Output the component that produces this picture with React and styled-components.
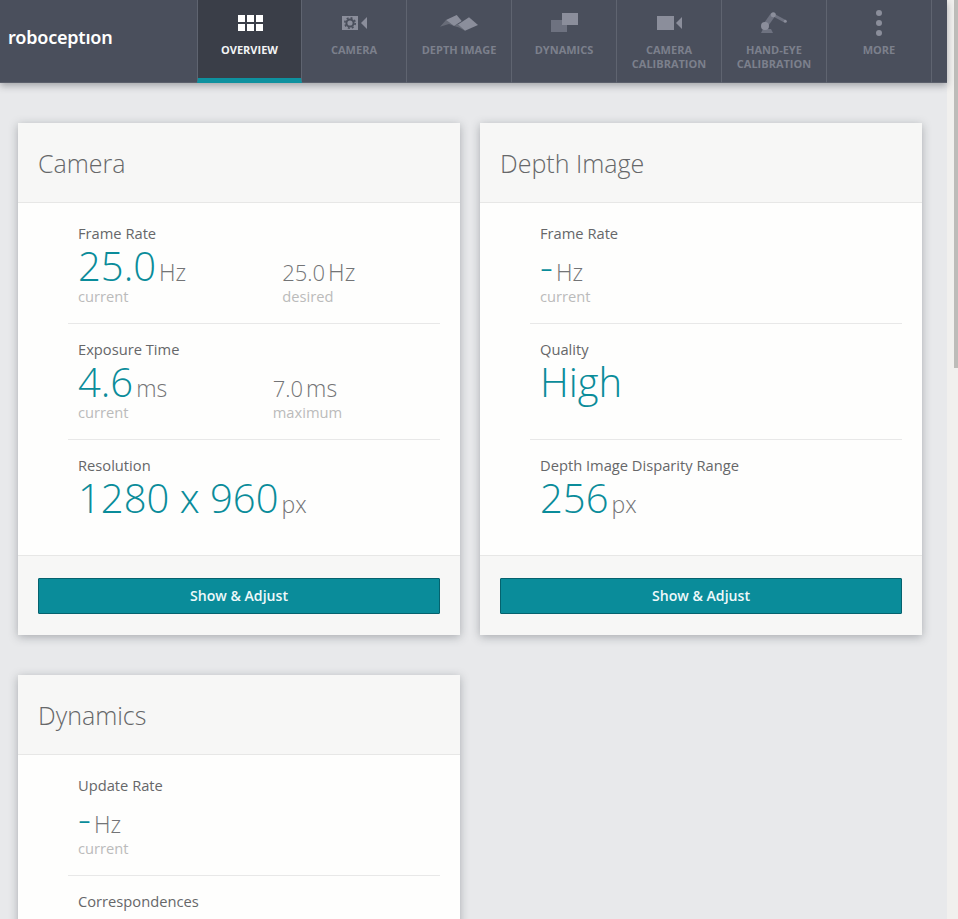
import React from "react";
import styled, { createGlobalStyle } from "styled-components";

const Global = createGlobalStyle`
  html, body { margin: 0; padding: 0; height: 100%; overflow: hidden; background: #e8e9eb; }
  * { box-sizing: border-box; }
  body { font-family: "Open Sans", "Noto Sans", sans-serif; }
`;

const Shell = styled.div`
  display: flex;
  width: 958px;
  height: 919px;
  overflow: hidden;
`;
const Main = styled.div`
  width: 947px;
  flex: none;
  display: flex;
  flex-direction: column;
  background: #e8e9eb;
`;
const ScrollTrack = styled.div`
  width: 11px;
  flex: none;
  background: #f1f0ee;
  display: flex;
  justify-content: flex-end;
`;
const ScrollThumb = styled.div`
  width: 4px;
  height: 368px;
  background: #bdbcb9;
`;
const Header = styled.header`
  height: 83px;
  flex: none;
  display: flex;
  background: #4a4f5c;
  border-bottom: 1px solid #5b5f6b;
  box-shadow: 0 3px 7px rgba(40, 44, 52, 0.35);
  position: relative;
  z-index: 2;
`;
const LogoArea = styled.div`
  width: 197px;
  flex: none;
  padding: 0 0 0 8px;
  display: flex;
  align-items: center;
`;
const Logo = styled.span`
  font-family: "Noto Sans", "Open Sans", sans-serif;
  font-weight: 600;
  font-size: 18px;
  line-height: 24px;
  letter-spacing: -0.2px;
  color: #fff;
  margin-top: -9px;
`;
const Nav = styled.nav`
  display: flex;
  height: 83px;
`;
const Tab = styled.div`
  width: 105px;
  height: 83px;
  flex: none;
  display: flex;
  flex-direction: column;
  align-items: center;
  border-right: 1px solid #5f6470;
  background: ${(p) => (p.$active ? "#3a3e48" : "transparent")};
  border-bottom: ${(p) => (p.$active ? "5px solid #0e919f" : "none")};
  border-left: ${(p) => (p.$active ? "1px solid #5f6470" : "none")};
`;
const TabIcon = styled.svg`
  width: 104px;
  height: 43px;
  flex: none;
  display: block;
  fill: #8b8e9b;
`;
const TabLabel = styled.div`
  font-size: 11px;
  font-weight: 700;
  line-height: 14px;
  text-align: center;
  text-transform: uppercase;
  color: ${(p) => (p.$active ? "#f3f4f5" : "#7c808c")};
`;
const Content = styled.main`
  flex: 1;
  min-height: 0;
  padding: 40px 0 0 18px;
  display: flex;
  flex-wrap: wrap;
  align-content: flex-start;
  column-gap: 20px;
  row-gap: 40px;
`;
const Card = styled.section`
  width: 442px;
  background: #fefefd;
  box-shadow: 0 2px 10px rgba(50, 54, 62, 0.35);
  border-radius: 1px;
`;
const CardHead = styled.div`
  height: 80px;
  padding: 0 20px;
  display: flex;
  align-items: center;
  background: #f7f7f6;
  border-bottom: 1px solid #e7e7e6;
`;
const CardTitle = styled.h2`
  margin: 0;
  font-size: 25px;
  font-weight: 300;
  color: #666769;
`;
const CardBody = styled.div`
  padding: 5px 20px 0 50px;
`;
const Row = styled.div`
  height: ${(p) => (p.$last ? 115 : 116)}px;
  padding: 15px 0 0 10px;
  border-bottom: ${(p) => (p.$last ? "none" : "1px solid #e8e8e8")};
`;
const RowLabel = styled.div`
  font-size: 14.7px;
  line-height: 20px;
  color: #666769;
`;
const Values = styled.div`
  display: flex;
  margin-top: 3px;
`;
const Metric = styled.div`
  margin-left: ${(p) => p.$offset || 0}px;
`;
const Reading = styled.div`
  height: 40px;
  font-size: 40px;
  line-height: 40px;
  white-space: nowrap;
  font-weight: 300;
  color: #737476;
`;
const BigNumber = styled.span`
  color: #0a8c9a;
`;
const SmallNumber = styled.span`
  font-size: 22px;
  line-height: 1;
`;
const Unit = styled.span`
  font-size: 23px;
  line-height: 1;
  margin-left: 3px;
`;
const Caption = styled.div`
  font-size: 14.7px;
  line-height: 20px;
  color: #bbbbbb;
`;
const CardFoot = styled.div`
  height: 80px;
  padding: 22px 20px 0;
  background: #f7f7f6;
  border-top: 1px solid #e7e7e6;
`;
const Button = styled.button`
  display: block;
  width: 100%;
  height: 36px;
  padding: 0 0 2px;
  border: 1px solid #05626e;
  border-radius: 1px;
  background: #0a8c9a;
  color: #eef9fa;
  font-family: inherit;
  font-size: 14.1px;
  font-weight: 600;
`;
const DashValue = styled.span`
  color: #0a8c9a;
`;

const icons = {
  overview: (
    <>
      {[0, 9, 18].flatMap((dx) =>
        [15, 24].map((y) => <rect key={dx + "-" + y} x={40 + dx} y={y} width="7" height="7" fill="#fff" />)
      )}
    </>
  ),
  camera: (
    <>
      <rect x="40" y="16" width="16" height="14" />
      <polygon points="59,23 65,17 65,29" />
      <circle cx="48" cy="23" r="3.6" fill="none" stroke="#4a4f5c" strokeWidth="2" />
      <circle cx="48" cy="23" r="5.2" fill="none" stroke="#4a4f5c" strokeWidth="1.6" strokeDasharray="2 2.08" />
    </>
  ),
  depth: (
    <>
      <polygon points="33,26.7 39,20 47,26 42,24" fill="#686c78" />
      <polygon points="47,26 51,24 58,30.7 52,27.5" fill="#686c78" />
      <polygon points="39,20 49.7,15 54.7,21 47,26" />
      <polygon points="51,24.5 62,17.3 71,25 58,30.7" />
    </>
  ),
  dynamics: (
    <>
      <rect x="39" y="20" width="16" height="12" fill="#6e7280" />
      <rect x="50" y="13" width="16" height="12" />
    </>
  ),
  calibration: (
    <>
      <rect x="40" y="16" width="17" height="14" />
      <polygon points="59,23 65,17 65,29" />
    </>
  ),
  robot: (
    <>
      <polygon points="39,33 41,29 49,29 51,33" fill="#6e7280" />
      <path d="M43 26 L51 14.7" stroke="#6e7280" strokeWidth="5" fill="none" />
      <path d="M51 14.7 L63 21.3" stroke="#6e7280" strokeWidth="3" fill="none" />
      <circle cx="43" cy="26" r="4" />
      <circle cx="51.3" cy="14.7" r="2.5" />
      <circle cx="63.3" cy="21.3" r="1.5" />
    </>
  ),
  more: (
    <>
      <circle cx="52" cy="13" r="3" />
      <circle cx="52" cy="23" r="3" />
      <circle cx="52" cy="33" r="3" />
    </>
  ),
};

const tabs = [
  { key: "overview", label: "Overview", active: true },
  { key: "camera", label: "Camera" },
  { key: "depth", label: "Depth Image" },
  { key: "dynamics", label: "Dynamics" },
  { key: "calibration", label: <>Camera<br />Calibration</> },
  { key: "robot", label: <>Hand-Eye<br />Calibration</> },
  { key: "more", label: "More" },
];

function Measure({ value, unit, caption, small, offset }) {
  const Num = small ? SmallNumber : BigNumber;
  return (
    <Metric $offset={offset}>
      <Reading>
        <Num>{value}</Num>
        {unit && <Unit>{unit}</Unit>}
      </Reading>
      {caption && <Caption>{caption}</Caption>}
    </Metric>
  );
}

function MetricRow({ label, children, last }) {
  return (
    <Row $last={last}>
      <RowLabel>{label}</RowLabel>
      <Values>{children}</Values>
    </Row>
  );
}

export default function App() {
  return (
    <Shell>
      <Global />
      <Main>
        <Header>
          <LogoArea>
            <Logo>roboceptıon</Logo>
          </LogoArea>
          <Nav>
            {tabs.map((t) => (
              <Tab key={t.key} $active={t.active}>
                <TabIcon viewBox="0 0 104 43">{icons[t.key]}</TabIcon>
                <TabLabel $active={t.active}>{t.label}</TabLabel>
              </Tab>
            ))}
          </Nav>
        </Header>
        <Content>
          <Card>
            <CardHead><CardTitle>Camera</CardTitle></CardHead>
            <CardBody>
              <MetricRow label="Frame Rate">
                <Measure value="25.0" unit="Hz" caption="current" />
                <Measure small value="25.0" unit="Hz" caption="desired" offset={96} />
              </MetricRow>
              <MetricRow label="Exposure Time">
                <Measure value="4.6" unit="ms" caption="current" />
                <Measure small value="7.0" unit="ms" caption="maximum" offset={105.5} />
              </MetricRow>
              <MetricRow label="Resolution" last>
                <Measure value="1280 x 960" unit="px" />
              </MetricRow>
            </CardBody>
            <CardFoot><Button>Show &amp; Adjust</Button></CardFoot>
          </Card>
          <Card>
            <CardHead><CardTitle>Depth Image</CardTitle></CardHead>
            <CardBody>
              <MetricRow label="Frame Rate">
                <Measure value={<DashValue>-</DashValue>} unit="Hz" caption="current" />
              </MetricRow>
              <MetricRow label="Quality">
                <Measure value="High" />
              </MetricRow>
              <MetricRow label="Depth Image Disparity Range" last>
                <Measure value="256" unit="px" />
              </MetricRow>
            </CardBody>
            <CardFoot><Button>Show &amp; Adjust</Button></CardFoot>
          </Card>
          <Card>
            <CardHead><CardTitle>Dynamics</CardTitle></CardHead>
            <CardBody>
              <MetricRow label="Update Rate">
                <Measure value={<DashValue>-</DashValue>} unit="Hz" caption="current" />
              </MetricRow>
              <MetricRow label="Correspondences" last>
                <Measure value="-" />
              </MetricRow>
            </CardBody>
          </Card>
        </Content>
      </Main>
      <ScrollTrack><ScrollThumb /></ScrollTrack>
    </Shell>
  );
}
